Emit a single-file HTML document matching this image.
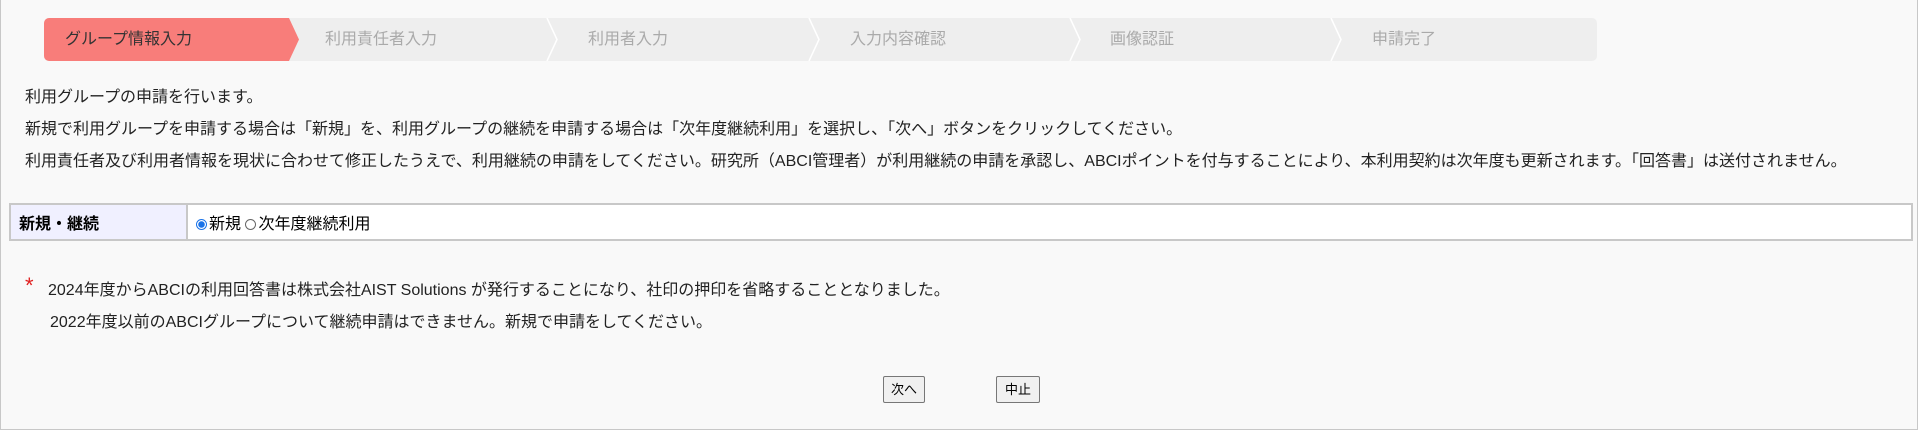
<!DOCTYPE html>
<html><head><meta charset="utf-8"><style>
body{margin:0;width:1920px;height:437px;background:#fff;font-family:"Liberation Sans","Noto Sans CJK JP",sans-serif;overflow:hidden}
.page{position:absolute;left:0;top:0;width:1916px;height:429px;border:1px solid #c8c8c8;border-top:none;background:#f9f9f9}
.steps{position:absolute;left:43px;top:18px;width:1553px;height:43px;background:#eee;border-radius:5px;overflow:hidden}
.st{position:absolute;top:0;height:43px;line-height:43px;font-size:16px;color:#aaa}
.act{position:absolute;left:0;top:0;height:43px;width:255px;background:#f87d7a;clip-path:polygon(0 0,245px 0,255px 50%,245px 100%,0 100%)}
.t{position:absolute;font-size:16px;color:#222;white-space:nowrap}
table{position:absolute;left:8px;top:203px;width:1904px;height:38px;border-collapse:collapse;border:2px solid #c8c8c8;background:#fff;font-size:16px}
td{border:2px solid #c8c8c8;padding:0 8px}
td.l{width:159px;background:#f0f0ff;font-weight:bold}
.r{display:inline-block;width:11px;height:11px;border:1px solid #666;border-radius:50%;vertical-align:-1px;margin:0 2px 0 0;box-sizing:border-box;background:#fff}
.r.on{border:1px solid #1a73e8;background:radial-gradient(circle,#1a73e8 0 3px,#fff 3.5px)}
.btn{position:absolute;top:376px;height:25px;border:1px solid #777;background:#f0f0f0;font-size:13px;line-height:25px;text-align:center;border-radius:2px}
</style></head><body><div class="page">
<div class="steps"><div class="act"></div>
<svg style="position:absolute;left:0;top:0" width="1553" height="43">
<g fill="none" stroke="#fff" stroke-width="1.5"><path d="M503 0 L513 21.5 L503 43"/><path d="M765 0 L775 21.5 L765 43"/><path d="M1026 0 L1036 21.5 L1026 43"/><path d="M1287 0 L1297 21.5 L1287 43"/></g></svg>
<div class="st" style="left:21px;color:#333">グループ情報入力</div>
<div class="st" style="left:281px">利用責任者入力</div>
<div class="st" style="left:544px">利用者入力</div>
<div class="st" style="left:806px">入力内容確認</div>
<div class="st" style="left:1066px">画像認証</div>
<div class="st" style="left:1328px">申請完了</div>
</div>
<div class="t" style="left:24px;top:83px">利用グループの申請を行います。</div>
<div class="t" style="left:24px;top:115px">新規で利用グループを申請する場合は「新規」を、利用グループの継続を申請する場合は「次年度継続利用」を選択し、「次へ」ボタンをクリックしてください。</div>
<div class="t" style="left:24px;top:147px">利用責任者及び利用者情報を現状に合わせて修正したうえで、利用継続の申請をしてください。研究所（ABCI管理者）が利用継続の申請を承認し、ABCIポイントを付与することにより、本利用契約は次年度も更新されます。「回答書」は送付されません。</div>
<table><tr><td class="l">新規・継続</td><td><span class="r on"></span>新規 <span class="r"></span>次年度継続利用</td></tr></table>
<div class="t" style="left:24px;top:273px;color:#e02020;font-size:22px">*</div>
<div class="t" style="left:47px;top:276px">2024年度からABCIの利用回答書は株式会社AIST Solutions が発行することになり、社印の押印を省略することとなりました。</div>
<div class="t" style="left:49px;top:308px">2022年度以前のABCIグループについて継続申請はできません。新規で申請をしてください。</div>
<div class="btn" style="left:882px;width:40px">次へ</div>
<div class="btn" style="left:995px;width:42px">中止</div>
</div></body></html>
